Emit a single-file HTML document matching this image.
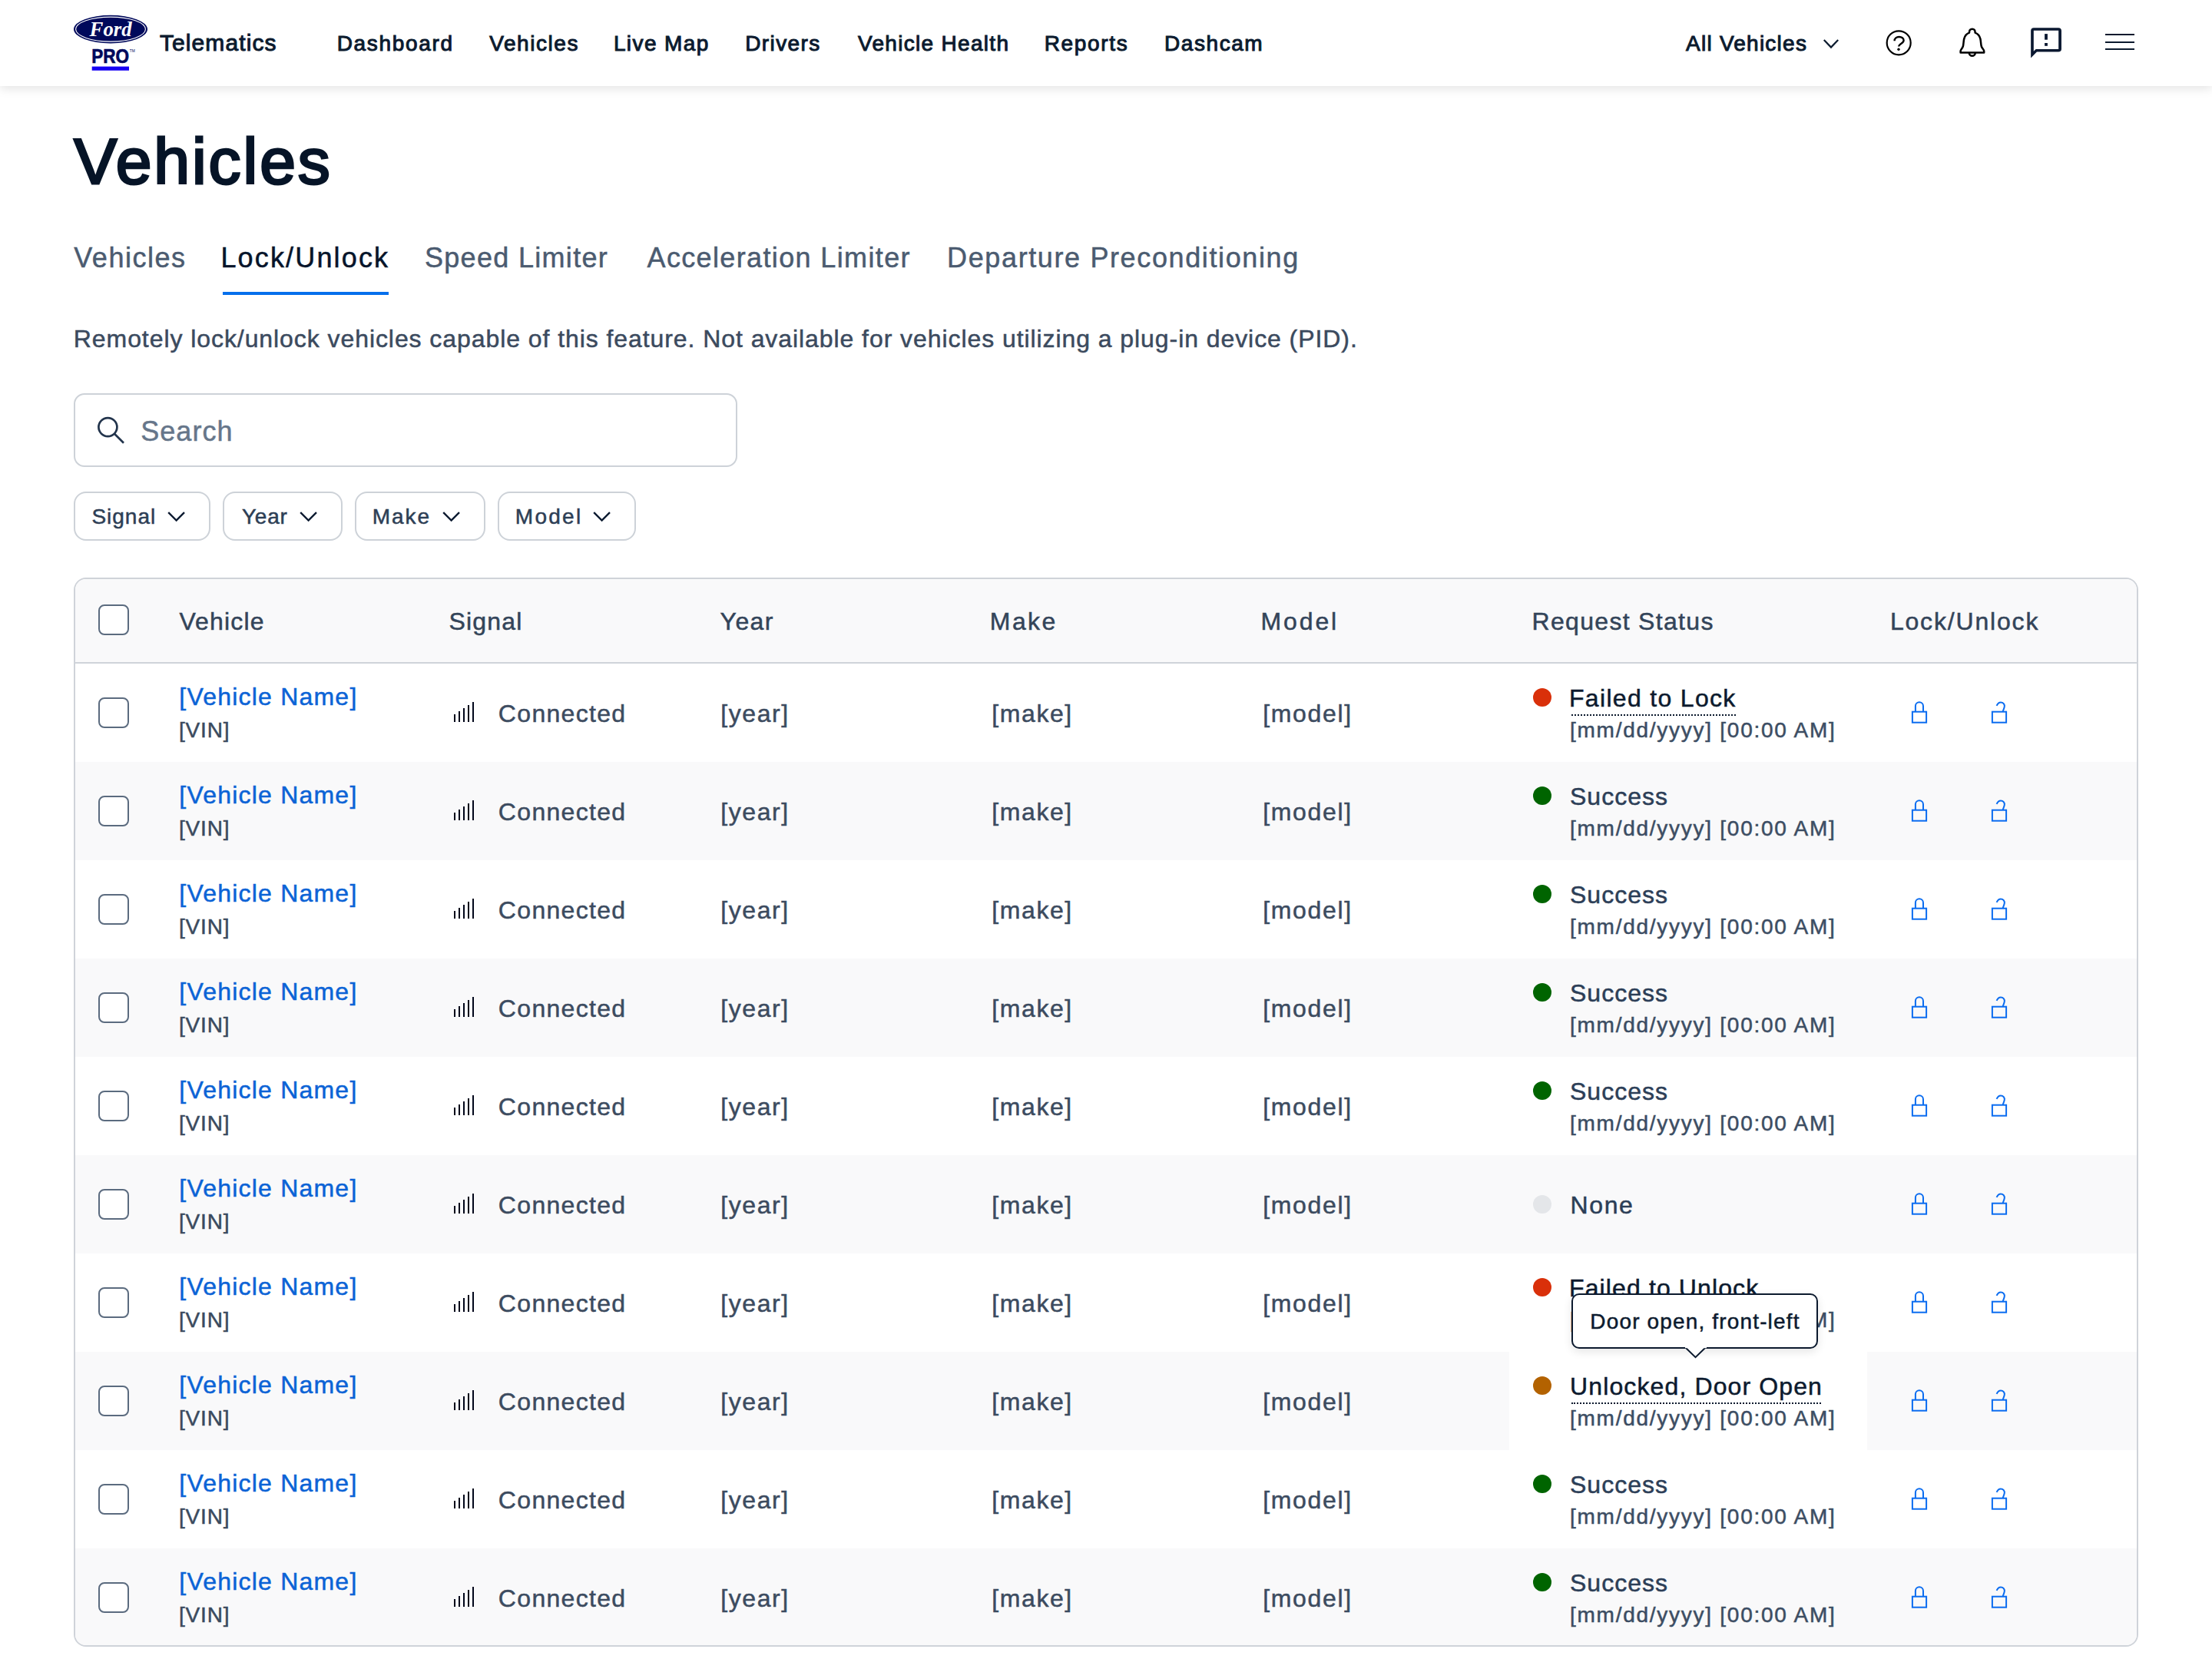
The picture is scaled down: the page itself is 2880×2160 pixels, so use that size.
<!DOCTYPE html>
<html><head><meta charset="utf-8"><style>
*{box-sizing:border-box;margin:0;padding:0}
html,body{background:#fff;overflow:hidden}
#root{position:relative;width:1440px;height:1080px;overflow:hidden;background:#fff;font-family:"Liberation Sans",sans-serif}
@media (min-width:2200px){#root{zoom:2}.f14{transform:translateY(0.5px)}.f15{transform:translateY(-0.5px)}.f16{transform:translateY(-1.5px)}}
.a{position:absolute;white-space:nowrap;line-height:1}
#hdr{position:absolute;left:0;top:0;width:1440px;height:56px;background:#fff;box-shadow:0 2px 6px rgba(0,0,0,0.1);z-index:2}
.nav{color:#0b1a2e}
.tab{color:#4b5b70}
.th{color:#334459}
.chip{position:absolute;top:320px;height:32px;border:1px solid #cdd2d8;border-radius:8px;background:#fff}
.chip span{position:absolute;font-size:14px;color:#2d3e55;top:9.3px;line-height:1;letter-spacing:0.3px;white-space:nowrap}
.chip svg{position:absolute;top:12.5px}
#tbl{position:absolute;left:48px;top:376px;width:1344px;height:696px;border:1px solid #cfd3d9;border-radius:8px;overflow:hidden;background:#fff}
.row{position:absolute;left:-1px;width:1344px;height:64px}
.row.g{background:#f9f9fa}
.cb{position:absolute;width:20px;height:20px;border:1px solid #5b6b7f;border-radius:4px;background:#fff}
.vn{color:#0b63d6}
.vin{color:#3a4a5e}
.cell{color:#3c4b5f}
.st{color:#2c3e57}
.st.u{color:#0c1a2e}
.ul{position:absolute;height:0;border-top:1px dotted #0c1a2e}
.dt{color:#3c4d63}
.dot{position:absolute;width:12px;height:12px;border-radius:50%;transform:translateX(-0.5px)}

.a{-webkit-text-stroke:0.25px currentColor}
</style></head><body><div id="root">
<div id="hdr">
<svg class="a" style="left:46px;top:8px" width="52" height="42" viewBox="0 0 52 42">
<ellipse cx="26" cy="11.05" rx="24" ry="9.15" fill="#00095b"/>
<ellipse cx="26" cy="11.05" rx="22.7" ry="8" fill="none" stroke="#fff" stroke-width="0.55"/>
<text x="12.3" y="15.6" font-family="Liberation Serif" font-style="italic" font-weight="700" font-size="13.5" textLength="27.5" lengthAdjust="spacingAndGlyphs" fill="#fff">Ford</text>
<text x="13.6" y="33.2" font-family="Liberation Sans" font-weight="700" font-size="12.8" textLength="24.4" lengthAdjust="spacingAndGlyphs" fill="#00095b" stroke="#00095b" stroke-width="0.35">PRO</text>
<text x="38.4" y="25.9" font-family="Liberation Sans" font-size="2.4" fill="#00095b">TM</text>
<rect x="13.85" y="35.3" width="24.15" height="2.6" fill="#1700f4"/>
</svg>
<div class="a f15" style="left:103.95px;top:21px;font-size:15px;font-weight:400;letter-spacing:0.550px;color:#0b1a2e;-webkit-text-stroke:0.50px currentColor">Telematics</div>
<div class="a nav f14" style="left:219.35px;top:21px;font-size:14px;font-weight:400;letter-spacing:0.838px;;-webkit-text-stroke:0.50px currentColor">Dashboard</div>
<div class="a nav f14" style="left:318.65px;top:21px;font-size:14px;font-weight:400;letter-spacing:0.779px;;-webkit-text-stroke:0.50px currentColor">Vehicles</div>
<div class="a nav f14" style="left:399.45px;top:21px;font-size:14px;font-weight:400;letter-spacing:0.700px;;-webkit-text-stroke:0.50px currentColor">Live Map</div>
<div class="a nav f14" style="left:485.10px;top:21px;font-size:14px;font-weight:400;letter-spacing:0.700px;;-webkit-text-stroke:0.50px currentColor">Drivers</div>
<div class="a nav f14" style="left:558.50px;top:21px;font-size:14px;font-weight:400;letter-spacing:0.654px;;-webkit-text-stroke:0.50px currentColor">Vehicle Health</div>
<div class="a nav f14" style="left:679.85px;top:21px;font-size:14px;font-weight:400;letter-spacing:0.842px;;-webkit-text-stroke:0.50px currentColor">Reports</div>
<div class="a nav f14" style="left:758.00px;top:21px;font-size:14px;font-weight:400;letter-spacing:0.783px;;-webkit-text-stroke:0.50px currentColor">Dashcam</div>
<div class="a nav f14" style="left:1097.50px;top:21px;font-size:14px;font-weight:400;letter-spacing:0.623px;;-webkit-text-stroke:0.50px currentColor">All Vehicles</div>
<svg class="a" style="left:1186px;top:24px" width="12" height="9" viewBox="0 0 12 9"><polyline points="1.4,2 6,6.8 10.6,2" fill="none" stroke="#0b1a2e" stroke-width="1.1"/></svg>
<svg class="a" style="left:1226px;top:17px" width="21" height="22" viewBox="0 0 21 22">
<circle cx="10.1" cy="10.9" r="7.75" fill="none" stroke="#000" stroke-width="1.1"/>
<path d="M7.3 9.6 C7.3 7.9 8.6 7 10.3 7 C12 7 13.3 7.9 13.3 9.4 C13.3 11.3 10.1 11.4 10.1 13.3" fill="none" stroke="#000" stroke-width="1.2"/>
<circle cx="10.0" cy="15.1" r="0.85" fill="#000"/>
</svg>
<svg class="a" style="left:1275px;top:17px" width="19" height="22" viewBox="0 0 19 22">
<path d="M1.3 17.3 H16.6 V16.2 C16.6 15.3 15.3 14.6 14.9 13.2 C14.5 11.7 14.6 10 14.2 8.3 C13.7 6.1 12.4 4.9 10.8 4.3 C10.9 2.6 10.1 1.9 8.92 1.9 C7.7 1.9 6.9 2.6 7.0 4.3 C5.4 4.9 4.1 6.1 3.6 8.3 C3.2 10 3.3 11.7 2.9 13.2 C2.5 14.6 1.3 15.3 1.3 16.2 Z" fill="none" stroke="#000" stroke-width="1.25" stroke-linejoin="round"/>
<path d="M6.9 17.4 A2 2 0 0 0 10.9 17.4" fill="none" stroke="#000" stroke-width="1.25"/>
</svg>
<svg class="a" style="left:1320px;top:17px" width="24" height="23" viewBox="0 0 24 23">
<path fill-rule="evenodd" fill="#0a1830" d="M2.08 3 Q2.08 1.07 4 1.07 H20 Q21.97 1.07 21.97 3 V14.9 Q21.97 16.8 20 16.8 H5.98 L2.08 20.8 Z M3.9 2.9 H20.1 V15 H5.33 L3.9 16.4 Z"/>
<rect x="11.05" y="5.05" width="1.9" height="3.8" fill="#0a1830"/>
<rect x="11.05" y="11.0" width="1.9" height="1.9" fill="#0a1830"/>
</svg>
<div class="a" style="left:1370.4px;top:21.90px;width:19.3px;height:1.1px;background:#0b1a2e"></div>
<div class="a" style="left:1370.4px;top:26.80px;width:19.3px;height:1.1px;background:#0b1a2e"></div>
<div class="a" style="left:1370.4px;top:31.60px;width:19.3px;height:1.1px;background:#0b1a2e"></div>
</div>
<div class="a f42" style="left:48.15px;top:84px;font-size:42px;font-weight:400;letter-spacing:1.479px;color:#061427;-webkit-text-stroke:1.50px currentColor">Vehicles</div>
<div class="a tab f18" style="left:48.15px;top:159px;font-size:18px;font-weight:400;letter-spacing:0.764px;">Vehicles</div>
<div class="a tab f18" style="left:143.70px;top:159px;font-size:18px;font-weight:400;letter-spacing:1.080px;color:#06142a">Lock/Unlock</div>
<div class="a tab f18" style="left:276.45px;top:159px;font-size:18px;font-weight:400;letter-spacing:0.658px;">Speed Limiter</div>
<div class="a tab f18" style="left:421.25px;top:159px;font-size:18px;font-weight:400;letter-spacing:0.682px;">Acceleration Limiter</div>
<div class="a tab f18" style="left:616.55px;top:159px;font-size:18px;font-weight:400;letter-spacing:0.810px;">Departure Preconditioning</div>
<div class="a" style="left:145px;top:190px;width:108px;height:2px;background:#066fec"></div>
<div class="a f16" style="left:47.90px;top:214px;font-size:16px;font-weight:400;letter-spacing:0.464px;color:#3b4a5e">Remotely lock/unlock vehicles capable of this feature. Not available for vehicles utilizing a plug-in device (PID).</div>
<div class="a" style="left:48px;top:256px;width:432px;height:48px;border:1px solid #cdd2d8;border-radius:7px;background:#fff"></div>
<svg class="a" style="left:62px;top:270px" width="20" height="20" viewBox="0 0 20 20">
<circle cx="8.2" cy="8.05" r="6" fill="none" stroke="#22344c" stroke-width="1.35"/>
<line x1="12.5" y1="12.4" x2="18.5" y2="18.35" stroke="#22344c" stroke-width="1.35"/>
</svg>
<div class="a f18" style="left:91.60px;top:272px;font-size:18px;font-weight:400;letter-spacing:0.530px;color:#66768a">Search</div>
<div class="chip" style="left:48px;width:89px"></div>
<div class="a f14" style="left:59.70px;top:329px;font-size:14px;font-weight:400;letter-spacing:0.500px;color:#2d3e55;z-index:1">Signal</div>
<svg class="a" style="left:108.55px;top:332.6px;z-index:1" width="13" height="8" viewBox="0 0 13 8"><polyline points="1.1,1.1 6.3,6.3 11.5,1.1" fill="none" stroke="#0b1a30" stroke-width="1.2"/></svg>
<div class="chip" style="left:145px;width:78px"></div>
<div class="a f14" style="left:157.45px;top:329px;font-size:14px;font-weight:400;letter-spacing:0.400px;color:#2d3e55;z-index:1">Year</div>
<svg class="a" style="left:194.55px;top:332.6px;z-index:1" width="13" height="8" viewBox="0 0 13 8"><polyline points="1.1,1.1 6.3,6.3 11.5,1.1" fill="none" stroke="#0b1a30" stroke-width="1.2"/></svg>
<div class="chip" style="left:231px;width:85px"></div>
<div class="a f14" style="left:242.40px;top:329px;font-size:14px;font-weight:400;letter-spacing:0.950px;color:#2d3e55;z-index:1">Make</div>
<svg class="a" style="left:287.60px;top:332.6px;z-index:1" width="13" height="8" viewBox="0 0 13 8"><polyline points="1.1,1.1 6.3,6.3 11.5,1.1" fill="none" stroke="#0b1a30" stroke-width="1.2"/></svg>
<div class="chip" style="left:324px;width:90px"></div>
<div class="a f14" style="left:335.40px;top:329px;font-size:14px;font-weight:400;letter-spacing:1.137px;color:#2d3e55;z-index:1">Model</div>
<svg class="a" style="left:385.55px;top:332.6px;z-index:1" width="13" height="8" viewBox="0 0 13 8"><polyline points="1.1,1.1 6.3,6.3 11.5,1.1" fill="none" stroke="#0b1a30" stroke-width="1.2"/></svg>
<div id="tbl">
<div class="row g" style="top:0px;height:55px;border-bottom:1px solid #cfd3d9;left:0;width:1342px"></div>
<div class="cb" style="left:15.00px;top:16.50px"></div>
<div class="a th f16" style="left:67.70px;top:21px;font-size:16px;font-weight:400;letter-spacing:0.575px;">Vehicle</div>
<div class="a th f16" style="left:243.20px;top:21px;font-size:16px;font-weight:400;letter-spacing:0.600px;">Signal</div>
<div class="a th f16" style="left:419.80px;top:21px;font-size:16px;font-weight:400;letter-spacing:0.700px;">Year</div>
<div class="a th f16" style="left:595.40px;top:21px;font-size:16px;font-weight:400;letter-spacing:1.217px;">Make</div>
<div class="a th f16" style="left:771.75px;top:21px;font-size:16px;font-weight:400;letter-spacing:1.438px;">Model</div>
<div class="a th f16" style="left:948.25px;top:21px;font-size:16px;font-weight:400;letter-spacing:0.658px;">Request Status</div>
<div class="a th f16" style="left:1181.45px;top:21px;font-size:16px;font-weight:400;letter-spacing:0.910px;">Lock/Unlock</div>
<div class="row" style="top:55.00px;left:0;width:1342px"></div>
<div class="cb" style="left:15.00px;top:77.20px"></div>
<div class="a vn f16" style="left:67.65px;top:70px;font-size:16px;font-weight:400;letter-spacing:0.606px;">[Vehicle Name]</div>
<div class="a vin f14" style="left:67.50px;top:91px;font-size:14px;font-weight:400;letter-spacing:0.412px;">[VIN]</div>
<svg class="a" style="left:246.00px;top:80.00px" width="14" height="14" viewBox="0 0 14 14"><rect x="0.5" y="8" width="1" height="5" fill="#00061a"/><rect x="3.5" y="6" width="1" height="7" fill="#00061a"/><rect x="6.5" y="4" width="1" height="9" fill="#00061a"/><rect x="9.5" y="2" width="1" height="11" fill="#00061a"/><rect x="12.5" y="0" width="1" height="13" fill="#00061a"/></svg>
<div class="a cell f16" style="left:275.43px;top:81px;font-size:16px;font-weight:400;letter-spacing:0.653px;">Connected</div>
<div class="a cell f16" style="left:420.10px;top:81px;font-size:16px;font-weight:400;letter-spacing:0.800px;">[year]</div>
<div class="a cell f16" style="left:596.65px;top:81px;font-size:16px;font-weight:400;letter-spacing:0.790px;">[make]</div>
<div class="a cell f16" style="left:773.15px;top:81px;font-size:16px;font-weight:400;letter-spacing:0.817px;">[model]</div>
<div class="dot" style="left:949.50px;top:70.80px;background:#d9300a"></div>
<div class="a st u f16" style="left:972.50px;top:71px;font-size:16px;font-weight:400;letter-spacing:0.658px;">Failed to Lock</div>
<div class="ul" style="left:973.90px;top:87.90px;width:107.0px"></div>
<div class="a dt f14" style="left:973.00px;top:91px;font-size:14px;font-weight:400;letter-spacing:0.870px;">[mm/dd/yyyy] [00:00 AM]</div>
<svg class="a" style="left:1195.00px;top:79.60px" width="11" height="15" viewBox="0 0 11 15"><g transform="translate(0.5,0.25)"><rect x="0.45" y="6.6" width="9.1" height="7" fill="none" stroke="#0a6cf0" stroke-width="1"/><path d="M2.45 6.6 V2.95 A2.525 2.525 0 0 1 7.5 2.95 V6.6" fill="none" stroke="#0a6cf0" stroke-width="1"/></g></svg>
<svg class="a" style="left:1247.00px;top:79.60px" width="11" height="15" viewBox="0 0 11 15"><g transform="translate(0.5,0.25)"><rect x="0.45" y="6.6" width="9.1" height="7" fill="none" stroke="#0a6cf0" stroke-width="1"/><path d="M3.3 2.7 C3.9 1.2 5 0.45 6 0.45 C7.6 0.45 8.6 1.8 8.4 3.2 C8.2 4.6 7.6 5.5 7.3 6.6" fill="none" stroke="#0a6cf0" stroke-width="1"/></g></svg>
<div class="row g" style="top:119.00px;left:0;width:1342px"></div>
<div class="cb" style="left:15.00px;top:141.20px"></div>
<div class="a vn f16" style="left:67.65px;top:134px;font-size:16px;font-weight:400;letter-spacing:0.606px;">[Vehicle Name]</div>
<div class="a vin f14" style="left:67.50px;top:155px;font-size:14px;font-weight:400;letter-spacing:0.412px;">[VIN]</div>
<svg class="a" style="left:246.00px;top:144.00px" width="14" height="14" viewBox="0 0 14 14"><rect x="0.5" y="8" width="1" height="5" fill="#00061a"/><rect x="3.5" y="6" width="1" height="7" fill="#00061a"/><rect x="6.5" y="4" width="1" height="9" fill="#00061a"/><rect x="9.5" y="2" width="1" height="11" fill="#00061a"/><rect x="12.5" y="0" width="1" height="13" fill="#00061a"/></svg>
<div class="a cell f16" style="left:275.43px;top:145px;font-size:16px;font-weight:400;letter-spacing:0.653px;">Connected</div>
<div class="a cell f16" style="left:420.10px;top:145px;font-size:16px;font-weight:400;letter-spacing:0.800px;">[year]</div>
<div class="a cell f16" style="left:596.65px;top:145px;font-size:16px;font-weight:400;letter-spacing:0.790px;">[make]</div>
<div class="a cell f16" style="left:773.15px;top:145px;font-size:16px;font-weight:400;letter-spacing:0.817px;">[model]</div>
<div class="dot" style="left:949.50px;top:134.80px;background:#006400"></div>
<div class="a st f16" style="left:973.00px;top:135px;font-size:16px;font-weight:400;letter-spacing:0.508px;">Success</div>
<div class="a dt f14" style="left:973.00px;top:155px;font-size:14px;font-weight:400;letter-spacing:0.870px;">[mm/dd/yyyy] [00:00 AM]</div>
<svg class="a" style="left:1195.00px;top:143.60px" width="11" height="15" viewBox="0 0 11 15"><g transform="translate(0.5,0.25)"><rect x="0.45" y="6.6" width="9.1" height="7" fill="none" stroke="#0a6cf0" stroke-width="1"/><path d="M2.45 6.6 V2.95 A2.525 2.525 0 0 1 7.5 2.95 V6.6" fill="none" stroke="#0a6cf0" stroke-width="1"/></g></svg>
<svg class="a" style="left:1247.00px;top:143.60px" width="11" height="15" viewBox="0 0 11 15"><g transform="translate(0.5,0.25)"><rect x="0.45" y="6.6" width="9.1" height="7" fill="none" stroke="#0a6cf0" stroke-width="1"/><path d="M3.3 2.7 C3.9 1.2 5 0.45 6 0.45 C7.6 0.45 8.6 1.8 8.4 3.2 C8.2 4.6 7.6 5.5 7.3 6.6" fill="none" stroke="#0a6cf0" stroke-width="1"/></g></svg>
<div class="row" style="top:183.00px;left:0;width:1342px"></div>
<div class="cb" style="left:15.00px;top:205.20px"></div>
<div class="a vn f16" style="left:67.65px;top:198px;font-size:16px;font-weight:400;letter-spacing:0.606px;">[Vehicle Name]</div>
<div class="a vin f14" style="left:67.50px;top:219px;font-size:14px;font-weight:400;letter-spacing:0.412px;">[VIN]</div>
<svg class="a" style="left:246.00px;top:208.00px" width="14" height="14" viewBox="0 0 14 14"><rect x="0.5" y="8" width="1" height="5" fill="#00061a"/><rect x="3.5" y="6" width="1" height="7" fill="#00061a"/><rect x="6.5" y="4" width="1" height="9" fill="#00061a"/><rect x="9.5" y="2" width="1" height="11" fill="#00061a"/><rect x="12.5" y="0" width="1" height="13" fill="#00061a"/></svg>
<div class="a cell f16" style="left:275.43px;top:209px;font-size:16px;font-weight:400;letter-spacing:0.653px;">Connected</div>
<div class="a cell f16" style="left:420.10px;top:209px;font-size:16px;font-weight:400;letter-spacing:0.800px;">[year]</div>
<div class="a cell f16" style="left:596.65px;top:209px;font-size:16px;font-weight:400;letter-spacing:0.790px;">[make]</div>
<div class="a cell f16" style="left:773.15px;top:209px;font-size:16px;font-weight:400;letter-spacing:0.817px;">[model]</div>
<div class="dot" style="left:949.50px;top:198.80px;background:#006400"></div>
<div class="a st f16" style="left:973.00px;top:199px;font-size:16px;font-weight:400;letter-spacing:0.508px;">Success</div>
<div class="a dt f14" style="left:973.00px;top:219px;font-size:14px;font-weight:400;letter-spacing:0.870px;">[mm/dd/yyyy] [00:00 AM]</div>
<svg class="a" style="left:1195.00px;top:207.60px" width="11" height="15" viewBox="0 0 11 15"><g transform="translate(0.5,0.25)"><rect x="0.45" y="6.6" width="9.1" height="7" fill="none" stroke="#0a6cf0" stroke-width="1"/><path d="M2.45 6.6 V2.95 A2.525 2.525 0 0 1 7.5 2.95 V6.6" fill="none" stroke="#0a6cf0" stroke-width="1"/></g></svg>
<svg class="a" style="left:1247.00px;top:207.60px" width="11" height="15" viewBox="0 0 11 15"><g transform="translate(0.5,0.25)"><rect x="0.45" y="6.6" width="9.1" height="7" fill="none" stroke="#0a6cf0" stroke-width="1"/><path d="M3.3 2.7 C3.9 1.2 5 0.45 6 0.45 C7.6 0.45 8.6 1.8 8.4 3.2 C8.2 4.6 7.6 5.5 7.3 6.6" fill="none" stroke="#0a6cf0" stroke-width="1"/></g></svg>
<div class="row g" style="top:247.00px;left:0;width:1342px"></div>
<div class="cb" style="left:15.00px;top:269.20px"></div>
<div class="a vn f16" style="left:67.65px;top:262px;font-size:16px;font-weight:400;letter-spacing:0.606px;">[Vehicle Name]</div>
<div class="a vin f14" style="left:67.50px;top:283px;font-size:14px;font-weight:400;letter-spacing:0.412px;">[VIN]</div>
<svg class="a" style="left:246.00px;top:272.00px" width="14" height="14" viewBox="0 0 14 14"><rect x="0.5" y="8" width="1" height="5" fill="#00061a"/><rect x="3.5" y="6" width="1" height="7" fill="#00061a"/><rect x="6.5" y="4" width="1" height="9" fill="#00061a"/><rect x="9.5" y="2" width="1" height="11" fill="#00061a"/><rect x="12.5" y="0" width="1" height="13" fill="#00061a"/></svg>
<div class="a cell f16" style="left:275.43px;top:273px;font-size:16px;font-weight:400;letter-spacing:0.653px;">Connected</div>
<div class="a cell f16" style="left:420.10px;top:273px;font-size:16px;font-weight:400;letter-spacing:0.800px;">[year]</div>
<div class="a cell f16" style="left:596.65px;top:273px;font-size:16px;font-weight:400;letter-spacing:0.790px;">[make]</div>
<div class="a cell f16" style="left:773.15px;top:273px;font-size:16px;font-weight:400;letter-spacing:0.817px;">[model]</div>
<div class="dot" style="left:949.50px;top:262.80px;background:#006400"></div>
<div class="a st f16" style="left:973.00px;top:263px;font-size:16px;font-weight:400;letter-spacing:0.508px;">Success</div>
<div class="a dt f14" style="left:973.00px;top:283px;font-size:14px;font-weight:400;letter-spacing:0.870px;">[mm/dd/yyyy] [00:00 AM]</div>
<svg class="a" style="left:1195.00px;top:271.60px" width="11" height="15" viewBox="0 0 11 15"><g transform="translate(0.5,0.25)"><rect x="0.45" y="6.6" width="9.1" height="7" fill="none" stroke="#0a6cf0" stroke-width="1"/><path d="M2.45 6.6 V2.95 A2.525 2.525 0 0 1 7.5 2.95 V6.6" fill="none" stroke="#0a6cf0" stroke-width="1"/></g></svg>
<svg class="a" style="left:1247.00px;top:271.60px" width="11" height="15" viewBox="0 0 11 15"><g transform="translate(0.5,0.25)"><rect x="0.45" y="6.6" width="9.1" height="7" fill="none" stroke="#0a6cf0" stroke-width="1"/><path d="M3.3 2.7 C3.9 1.2 5 0.45 6 0.45 C7.6 0.45 8.6 1.8 8.4 3.2 C8.2 4.6 7.6 5.5 7.3 6.6" fill="none" stroke="#0a6cf0" stroke-width="1"/></g></svg>
<div class="row" style="top:311.00px;left:0;width:1342px"></div>
<div class="cb" style="left:15.00px;top:333.20px"></div>
<div class="a vn f16" style="left:67.65px;top:326px;font-size:16px;font-weight:400;letter-spacing:0.606px;">[Vehicle Name]</div>
<div class="a vin f14" style="left:67.50px;top:347px;font-size:14px;font-weight:400;letter-spacing:0.412px;">[VIN]</div>
<svg class="a" style="left:246.00px;top:336.00px" width="14" height="14" viewBox="0 0 14 14"><rect x="0.5" y="8" width="1" height="5" fill="#00061a"/><rect x="3.5" y="6" width="1" height="7" fill="#00061a"/><rect x="6.5" y="4" width="1" height="9" fill="#00061a"/><rect x="9.5" y="2" width="1" height="11" fill="#00061a"/><rect x="12.5" y="0" width="1" height="13" fill="#00061a"/></svg>
<div class="a cell f16" style="left:275.43px;top:337px;font-size:16px;font-weight:400;letter-spacing:0.653px;">Connected</div>
<div class="a cell f16" style="left:420.10px;top:337px;font-size:16px;font-weight:400;letter-spacing:0.800px;">[year]</div>
<div class="a cell f16" style="left:596.65px;top:337px;font-size:16px;font-weight:400;letter-spacing:0.790px;">[make]</div>
<div class="a cell f16" style="left:773.15px;top:337px;font-size:16px;font-weight:400;letter-spacing:0.817px;">[model]</div>
<div class="dot" style="left:949.50px;top:326.80px;background:#006400"></div>
<div class="a st f16" style="left:973.00px;top:327px;font-size:16px;font-weight:400;letter-spacing:0.508px;">Success</div>
<div class="a dt f14" style="left:973.00px;top:347px;font-size:14px;font-weight:400;letter-spacing:0.870px;">[mm/dd/yyyy] [00:00 AM]</div>
<svg class="a" style="left:1195.00px;top:335.60px" width="11" height="15" viewBox="0 0 11 15"><g transform="translate(0.5,0.25)"><rect x="0.45" y="6.6" width="9.1" height="7" fill="none" stroke="#0a6cf0" stroke-width="1"/><path d="M2.45 6.6 V2.95 A2.525 2.525 0 0 1 7.5 2.95 V6.6" fill="none" stroke="#0a6cf0" stroke-width="1"/></g></svg>
<svg class="a" style="left:1247.00px;top:335.60px" width="11" height="15" viewBox="0 0 11 15"><g transform="translate(0.5,0.25)"><rect x="0.45" y="6.6" width="9.1" height="7" fill="none" stroke="#0a6cf0" stroke-width="1"/><path d="M3.3 2.7 C3.9 1.2 5 0.45 6 0.45 C7.6 0.45 8.6 1.8 8.4 3.2 C8.2 4.6 7.6 5.5 7.3 6.6" fill="none" stroke="#0a6cf0" stroke-width="1"/></g></svg>
<div class="row g" style="top:375.00px;left:0;width:1342px"></div>
<div class="cb" style="left:15.00px;top:397.20px"></div>
<div class="a vn f16" style="left:67.65px;top:390px;font-size:16px;font-weight:400;letter-spacing:0.606px;">[Vehicle Name]</div>
<div class="a vin f14" style="left:67.50px;top:411px;font-size:14px;font-weight:400;letter-spacing:0.412px;">[VIN]</div>
<svg class="a" style="left:246.00px;top:400.00px" width="14" height="14" viewBox="0 0 14 14"><rect x="0.5" y="8" width="1" height="5" fill="#00061a"/><rect x="3.5" y="6" width="1" height="7" fill="#00061a"/><rect x="6.5" y="4" width="1" height="9" fill="#00061a"/><rect x="9.5" y="2" width="1" height="11" fill="#00061a"/><rect x="12.5" y="0" width="1" height="13" fill="#00061a"/></svg>
<div class="a cell f16" style="left:275.43px;top:401px;font-size:16px;font-weight:400;letter-spacing:0.653px;">Connected</div>
<div class="a cell f16" style="left:420.10px;top:401px;font-size:16px;font-weight:400;letter-spacing:0.800px;">[year]</div>
<div class="a cell f16" style="left:596.65px;top:401px;font-size:16px;font-weight:400;letter-spacing:0.790px;">[make]</div>
<div class="a cell f16" style="left:773.15px;top:401px;font-size:16px;font-weight:400;letter-spacing:0.817px;">[model]</div>
<div class="dot" style="left:949.50px;top:401.00px;background:#e4e6e9"></div>
<div class="a st f16" style="left:973.25px;top:401px;font-size:16px;font-weight:400;letter-spacing:0.817px;">None</div>
<svg class="a" style="left:1195.00px;top:399.60px" width="11" height="15" viewBox="0 0 11 15"><g transform="translate(0.5,0.25)"><rect x="0.45" y="6.6" width="9.1" height="7" fill="none" stroke="#0a6cf0" stroke-width="1"/><path d="M2.45 6.6 V2.95 A2.525 2.525 0 0 1 7.5 2.95 V6.6" fill="none" stroke="#0a6cf0" stroke-width="1"/></g></svg>
<svg class="a" style="left:1247.00px;top:399.60px" width="11" height="15" viewBox="0 0 11 15"><g transform="translate(0.5,0.25)"><rect x="0.45" y="6.6" width="9.1" height="7" fill="none" stroke="#0a6cf0" stroke-width="1"/><path d="M3.3 2.7 C3.9 1.2 5 0.45 6 0.45 C7.6 0.45 8.6 1.8 8.4 3.2 C8.2 4.6 7.6 5.5 7.3 6.6" fill="none" stroke="#0a6cf0" stroke-width="1"/></g></svg>
<div class="row" style="top:439.00px;left:0;width:1342px"></div>
<div class="cb" style="left:15.00px;top:461.20px"></div>
<div class="a vn f16" style="left:67.65px;top:454px;font-size:16px;font-weight:400;letter-spacing:0.606px;">[Vehicle Name]</div>
<div class="a vin f14" style="left:67.50px;top:475px;font-size:14px;font-weight:400;letter-spacing:0.412px;">[VIN]</div>
<svg class="a" style="left:246.00px;top:464.00px" width="14" height="14" viewBox="0 0 14 14"><rect x="0.5" y="8" width="1" height="5" fill="#00061a"/><rect x="3.5" y="6" width="1" height="7" fill="#00061a"/><rect x="6.5" y="4" width="1" height="9" fill="#00061a"/><rect x="9.5" y="2" width="1" height="11" fill="#00061a"/><rect x="12.5" y="0" width="1" height="13" fill="#00061a"/></svg>
<div class="a cell f16" style="left:275.43px;top:465px;font-size:16px;font-weight:400;letter-spacing:0.653px;">Connected</div>
<div class="a cell f16" style="left:420.10px;top:465px;font-size:16px;font-weight:400;letter-spacing:0.800px;">[year]</div>
<div class="a cell f16" style="left:596.65px;top:465px;font-size:16px;font-weight:400;letter-spacing:0.790px;">[make]</div>
<div class="a cell f16" style="left:773.15px;top:465px;font-size:16px;font-weight:400;letter-spacing:0.817px;">[model]</div>
<div class="dot" style="left:949.50px;top:454.80px;background:#d9300a"></div>
<div class="a st u f16" style="left:972.50px;top:455px;font-size:16px;font-weight:400;letter-spacing:0.560px;">Failed to Unlock</div>
<div class="ul" style="left:973.90px;top:471.90px;width:121.9px"></div>
<div class="a dt f14" style="left:973.00px;top:475px;font-size:14px;font-weight:400;letter-spacing:0.870px;">[mm/dd/yyyy] [00:00 AM]</div>
<svg class="a" style="left:1195.00px;top:463.60px" width="11" height="15" viewBox="0 0 11 15"><g transform="translate(0.5,0.25)"><rect x="0.45" y="6.6" width="9.1" height="7" fill="none" stroke="#0a6cf0" stroke-width="1"/><path d="M2.45 6.6 V2.95 A2.525 2.525 0 0 1 7.5 2.95 V6.6" fill="none" stroke="#0a6cf0" stroke-width="1"/></g></svg>
<svg class="a" style="left:1247.00px;top:463.60px" width="11" height="15" viewBox="0 0 11 15"><g transform="translate(0.5,0.25)"><rect x="0.45" y="6.6" width="9.1" height="7" fill="none" stroke="#0a6cf0" stroke-width="1"/><path d="M3.3 2.7 C3.9 1.2 5 0.45 6 0.45 C7.6 0.45 8.6 1.8 8.4 3.2 C8.2 4.6 7.6 5.5 7.3 6.6" fill="none" stroke="#0a6cf0" stroke-width="1"/></g></svg>
<div class="row g" style="top:503.00px;left:0;width:1342px"></div>
<div class="a" style="left:933.50px;top:503.00px;width:233px;height:64px;background:#fff"></div>
<div class="cb" style="left:15.00px;top:525.20px"></div>
<div class="a vn f16" style="left:67.65px;top:518px;font-size:16px;font-weight:400;letter-spacing:0.606px;">[Vehicle Name]</div>
<div class="a vin f14" style="left:67.50px;top:539px;font-size:14px;font-weight:400;letter-spacing:0.412px;">[VIN]</div>
<svg class="a" style="left:246.00px;top:528.00px" width="14" height="14" viewBox="0 0 14 14"><rect x="0.5" y="8" width="1" height="5" fill="#00061a"/><rect x="3.5" y="6" width="1" height="7" fill="#00061a"/><rect x="6.5" y="4" width="1" height="9" fill="#00061a"/><rect x="9.5" y="2" width="1" height="11" fill="#00061a"/><rect x="12.5" y="0" width="1" height="13" fill="#00061a"/></svg>
<div class="a cell f16" style="left:275.43px;top:529px;font-size:16px;font-weight:400;letter-spacing:0.653px;">Connected</div>
<div class="a cell f16" style="left:420.10px;top:529px;font-size:16px;font-weight:400;letter-spacing:0.800px;">[year]</div>
<div class="a cell f16" style="left:596.65px;top:529px;font-size:16px;font-weight:400;letter-spacing:0.790px;">[make]</div>
<div class="a cell f16" style="left:773.15px;top:529px;font-size:16px;font-weight:400;letter-spacing:0.817px;">[model]</div>
<div class="dot" style="left:949.50px;top:518.80px;background:#b36200"></div>
<div class="a st u f16" style="left:973.00px;top:519px;font-size:16px;font-weight:400;letter-spacing:0.561px;">Unlocked, Door Open</div>
<div class="ul" style="left:973.90px;top:535.90px;width:162.6px"></div>
<div class="a dt f14" style="left:973.00px;top:539px;font-size:14px;font-weight:400;letter-spacing:0.870px;">[mm/dd/yyyy] [00:00 AM]</div>
<svg class="a" style="left:1195.00px;top:527.60px" width="11" height="15" viewBox="0 0 11 15"><g transform="translate(0.5,0.25)"><rect x="0.45" y="6.6" width="9.1" height="7" fill="none" stroke="#0a6cf0" stroke-width="1"/><path d="M2.45 6.6 V2.95 A2.525 2.525 0 0 1 7.5 2.95 V6.6" fill="none" stroke="#0a6cf0" stroke-width="1"/></g></svg>
<svg class="a" style="left:1247.00px;top:527.60px" width="11" height="15" viewBox="0 0 11 15"><g transform="translate(0.5,0.25)"><rect x="0.45" y="6.6" width="9.1" height="7" fill="none" stroke="#0a6cf0" stroke-width="1"/><path d="M3.3 2.7 C3.9 1.2 5 0.45 6 0.45 C7.6 0.45 8.6 1.8 8.4 3.2 C8.2 4.6 7.6 5.5 7.3 6.6" fill="none" stroke="#0a6cf0" stroke-width="1"/></g></svg>
<div class="row" style="top:567.00px;left:0;width:1342px"></div>
<div class="cb" style="left:15.00px;top:589.20px"></div>
<div class="a vn f16" style="left:67.65px;top:582px;font-size:16px;font-weight:400;letter-spacing:0.606px;">[Vehicle Name]</div>
<div class="a vin f14" style="left:67.50px;top:603px;font-size:14px;font-weight:400;letter-spacing:0.412px;">[VIN]</div>
<svg class="a" style="left:246.00px;top:592.00px" width="14" height="14" viewBox="0 0 14 14"><rect x="0.5" y="8" width="1" height="5" fill="#00061a"/><rect x="3.5" y="6" width="1" height="7" fill="#00061a"/><rect x="6.5" y="4" width="1" height="9" fill="#00061a"/><rect x="9.5" y="2" width="1" height="11" fill="#00061a"/><rect x="12.5" y="0" width="1" height="13" fill="#00061a"/></svg>
<div class="a cell f16" style="left:275.43px;top:593px;font-size:16px;font-weight:400;letter-spacing:0.653px;">Connected</div>
<div class="a cell f16" style="left:420.10px;top:593px;font-size:16px;font-weight:400;letter-spacing:0.800px;">[year]</div>
<div class="a cell f16" style="left:596.65px;top:593px;font-size:16px;font-weight:400;letter-spacing:0.790px;">[make]</div>
<div class="a cell f16" style="left:773.15px;top:593px;font-size:16px;font-weight:400;letter-spacing:0.817px;">[model]</div>
<div class="dot" style="left:949.50px;top:582.80px;background:#006400"></div>
<div class="a st f16" style="left:973.00px;top:583px;font-size:16px;font-weight:400;letter-spacing:0.508px;">Success</div>
<div class="a dt f14" style="left:973.00px;top:603px;font-size:14px;font-weight:400;letter-spacing:0.870px;">[mm/dd/yyyy] [00:00 AM]</div>
<svg class="a" style="left:1195.00px;top:591.60px" width="11" height="15" viewBox="0 0 11 15"><g transform="translate(0.5,0.25)"><rect x="0.45" y="6.6" width="9.1" height="7" fill="none" stroke="#0a6cf0" stroke-width="1"/><path d="M2.45 6.6 V2.95 A2.525 2.525 0 0 1 7.5 2.95 V6.6" fill="none" stroke="#0a6cf0" stroke-width="1"/></g></svg>
<svg class="a" style="left:1247.00px;top:591.60px" width="11" height="15" viewBox="0 0 11 15"><g transform="translate(0.5,0.25)"><rect x="0.45" y="6.6" width="9.1" height="7" fill="none" stroke="#0a6cf0" stroke-width="1"/><path d="M3.3 2.7 C3.9 1.2 5 0.45 6 0.45 C7.6 0.45 8.6 1.8 8.4 3.2 C8.2 4.6 7.6 5.5 7.3 6.6" fill="none" stroke="#0a6cf0" stroke-width="1"/></g></svg>
<div class="row g" style="top:631.00px;left:0;width:1342px"></div>
<div class="cb" style="left:15.00px;top:653.20px"></div>
<div class="a vn f16" style="left:67.65px;top:646px;font-size:16px;font-weight:400;letter-spacing:0.606px;">[Vehicle Name]</div>
<div class="a vin f14" style="left:67.50px;top:667px;font-size:14px;font-weight:400;letter-spacing:0.412px;">[VIN]</div>
<svg class="a" style="left:246.00px;top:656.00px" width="14" height="14" viewBox="0 0 14 14"><rect x="0.5" y="8" width="1" height="5" fill="#00061a"/><rect x="3.5" y="6" width="1" height="7" fill="#00061a"/><rect x="6.5" y="4" width="1" height="9" fill="#00061a"/><rect x="9.5" y="2" width="1" height="11" fill="#00061a"/><rect x="12.5" y="0" width="1" height="13" fill="#00061a"/></svg>
<div class="a cell f16" style="left:275.43px;top:657px;font-size:16px;font-weight:400;letter-spacing:0.653px;">Connected</div>
<div class="a cell f16" style="left:420.10px;top:657px;font-size:16px;font-weight:400;letter-spacing:0.800px;">[year]</div>
<div class="a cell f16" style="left:596.65px;top:657px;font-size:16px;font-weight:400;letter-spacing:0.790px;">[make]</div>
<div class="a cell f16" style="left:773.15px;top:657px;font-size:16px;font-weight:400;letter-spacing:0.817px;">[model]</div>
<div class="dot" style="left:949.50px;top:646.80px;background:#006400"></div>
<div class="a st f16" style="left:973.00px;top:647px;font-size:16px;font-weight:400;letter-spacing:0.508px;">Success</div>
<div class="a dt f14" style="left:973.00px;top:667px;font-size:14px;font-weight:400;letter-spacing:0.870px;">[mm/dd/yyyy] [00:00 AM]</div>
<svg class="a" style="left:1195.00px;top:655.60px" width="11" height="15" viewBox="0 0 11 15"><g transform="translate(0.5,0.25)"><rect x="0.45" y="6.6" width="9.1" height="7" fill="none" stroke="#0a6cf0" stroke-width="1"/><path d="M2.45 6.6 V2.95 A2.525 2.525 0 0 1 7.5 2.95 V6.6" fill="none" stroke="#0a6cf0" stroke-width="1"/></g></svg>
<svg class="a" style="left:1247.00px;top:655.60px" width="11" height="15" viewBox="0 0 11 15"><g transform="translate(0.5,0.25)"><rect x="0.45" y="6.6" width="9.1" height="7" fill="none" stroke="#0a6cf0" stroke-width="1"/><path d="M3.3 2.7 C3.9 1.2 5 0.45 6 0.45 C7.6 0.45 8.6 1.8 8.4 3.2 C8.2 4.6 7.6 5.5 7.3 6.6" fill="none" stroke="#0a6cf0" stroke-width="1"/></g></svg>
</div>
<div class="a" style="left:1023.15px;top:842px;width:160.55px;height:36px;border:1px solid #0c1a2e;border-radius:5px;background:#fff;box-shadow:0 2px 6px rgba(0,0,0,0.10);z-index:3"></div>
<svg class="a" style="left:1096px;top:876px;z-index:4" width="16" height="10" viewBox="0 0 16 10"><path d="M1.5 1.5 L7.75 7.6 L14 1.5" fill="#fff" stroke="#0c1a2e" stroke-width="1"/><rect x="1" y="0" width="14" height="1.6" fill="#fff"/></svg>
<div class="a f14" style="left:1035.15px;top:853px;font-size:14px;font-weight:400;letter-spacing:0.578px;color:#0c1a2e;z-index:5">Door open, front-left</div>
</div></body></html>
